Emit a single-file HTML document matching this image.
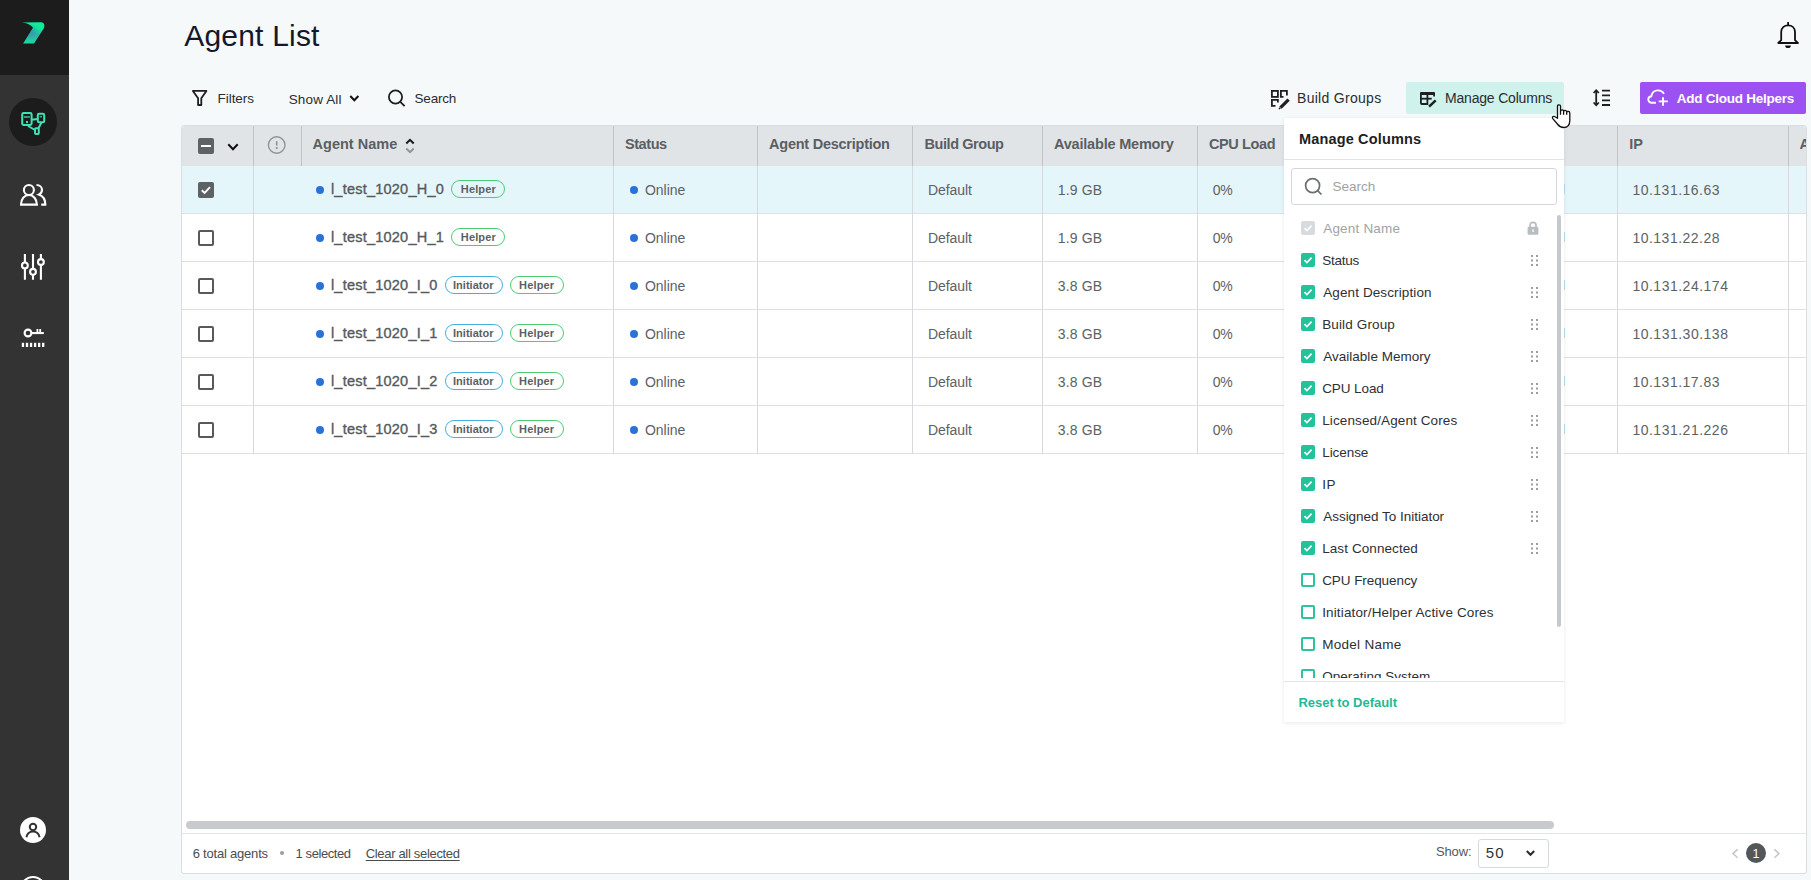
<!DOCTYPE html>
<html><head><meta charset="utf-8">
<style>
*{box-sizing:border-box;margin:0;padding:0}
html,body{width:1811px;height:880px;overflow:hidden}
body{background:#f5f9fa;font-family:"Liberation Sans",sans-serif;color:#4a4a4a;position:relative}
.a{position:absolute}
.t{position:absolute;line-height:1;white-space:nowrap}
#side{left:0;top:0;width:69px;height:880px;background:#333333}
#sidetop{left:0;top:0;width:69px;height:74.5px;background:#1c1c1c}
#table{left:181px;top:125px;width:1626px;height:749px;background:#fff;border:1px solid #dde1e5;border-radius:5px;overflow:hidden}
.vl{position:absolute;width:1px;background:#d6dadd}
.hl{position:absolute;height:1px;background:#dde1e5}
.th{font-size:14.5px;font-weight:bold;color:#575c60}
.td{font-size:14px;color:#555}
.cb{position:absolute;width:16px;height:16px;border:2px solid #555;border-radius:2px;background:#fff}
.dot{position:absolute;width:8px;height:8px;border-radius:50%;background:#2a72d8}
.tag{position:absolute;height:18px;border-radius:9px;font-size:12px;line-height:16px;color:#555;white-space:nowrap;text-align:center}
.ti{border:1px solid #45aee0;width:58px}
.th2{border:1px solid #4ccc78;width:55px}
#pop{left:1284px;top:118px;width:280px;height:604px;background:#fff;box-shadow:0 1px 6px rgba(0,0,0,0.13);border-radius:2px;overflow:hidden}
.pl{font-size:13.6px;color:#333}
.pcb{position:absolute;left:17px;width:14px;height:14px;border-radius:2px;background:#1fbf99}
.pcbo{position:absolute;left:17px;width:14px;height:14px;border-radius:2px;border:2px solid #1fbf99;background:#fff}
.drag{position:absolute;left:247px;width:7px;height:12px}
</style></head>
<body>
<div id="side" class="a"></div>
<div id="sidetop" class="a"></div>
<!-- logo -->
<svg class="a" style="left:0;top:0" width="69" height="74" viewBox="0 0 69 74">
  <defs>
    <linearGradient id="lg1" x1="0" y1="0" x2="0" y2="1">
      <stop offset="0" stop-color="#0df09a"/><stop offset="0.3" stop-color="#0de99b"/><stop offset="0.6" stop-color="#2fb6a4"/><stop offset="1" stop-color="#17dca0"/>
    </linearGradient>
    <radialGradient id="rg1" cx="31.5" cy="32" r="8" gradientUnits="userSpaceOnUse">
      <stop offset="0" stop-color="#3a8fb0" stop-opacity="0.85"/><stop offset="1" stop-color="#3a8fb0" stop-opacity="0"/>
    </radialGradient>
  </defs>
  <path d="M21.7 22.4 L41.2 22.3 Q45.5 23 44 28 L34 43.5 L23.1 43.5 L33.1 27.8 Q30 23 21.7 22.4 Z" fill="url(#lg1)"/>
  <path d="M21.7 22.4 L41.2 22.3 Q45.5 23 44 28 L34 43.5 L23.1 43.5 L33.1 27.8 Q30 23 21.7 22.4 Z" fill="url(#rg1)"/>
</svg>
<!-- active nav circle -->
<div class="a" style="left:9px;top:98px;width:48px;height:48px;border-radius:50%;background:#1c1c1c"></div>
<svg class="a" style="left:13px;top:102px" width="40" height="40" viewBox="0 0 40 40" fill="none" stroke="#3de3b2" stroke-width="2" stroke-linejoin="round">
  <rect x="9.2" y="11" width="9.4" height="12" rx="1.4"/>
  <rect x="24.8" y="11.7" width="6.4" height="8.6" rx="1.3"/>
  <rect x="22" y="26.2" width="3.8" height="5.8" rx="1"/>
  <line x1="18.6" y1="17.7" x2="24.8" y2="17"/>
  <line x1="15" y1="24" x2="22" y2="28"/>
  <line x1="28.5" y1="20.3" x2="25.5" y2="26.2"/>
  <line x1="11" y1="15" x2="16.8" y2="15" stroke-width="1.3"/>
  <rect x="13" y="19" width="2" height="2" fill="#3ddfb0" stroke="none"/>
  <line x1="26.8" y1="14.8" x2="29" y2="14.8" stroke-width="1.1"/>
</svg>
<!-- users -->
<svg class="a" style="left:16px;top:178px" width="34" height="34" viewBox="0 0 34 34" fill="none" stroke="#fff" stroke-width="2.1">
  <circle cx="12.9" cy="12" r="5"/>
  <path d="M5 26.6 C5 21 8.5 17 12.9 17 C17.3 17 20.9 21 20.9 26.6 Z"/>
  <path d="M20.5 7 C23.8 7 26 9.2 26 11.8 C26 14.2 24.6 15.8 22.8 16.6 C26.7 18 29.3 21.8 29.3 26.6 H25.2"/>
</svg>
<!-- sliders -->
<svg class="a" style="left:16px;top:250px" width="34" height="34" viewBox="0 0 34 34" fill="none" stroke="#fff" stroke-width="2.1">
  <path d="M8.9 3.9 V12.5 M8.9 18.3 V29.7"/><circle cx="8.9" cy="15.4" r="2.9"/>
  <path d="M17 3.9 V18.9 M17 24.7 V29.7"/><circle cx="17" cy="21.8" r="2.9"/>
  <path d="M24.9 3.9 V9.1 M24.9 14.9 V29.7"/><circle cx="24.9" cy="12" r="2.9"/>
</svg>
<!-- key -->
<svg class="a" style="left:16px;top:320px" width="34" height="34" viewBox="0 0 34 34" fill="#fff">
  <circle cx="12" cy="13" r="3.4" fill="none" stroke="#fff" stroke-width="2.1"/>
  <rect x="15.2" y="12" width="12.6" height="2.1"/>
  <rect x="20.5" y="9" width="1.8" height="4"/><rect x="23.3" y="9" width="1.8" height="4"/>
  <rect x="5.8" y="22.8" width="2.3" height="4.2"/><rect x="9.85" y="22.8" width="2.3" height="4.2"/><rect x="13.9" y="22.8" width="2.3" height="4.2"/><rect x="17.95" y="22.8" width="2.3" height="4.2"/><rect x="22" y="22.8" width="2.3" height="4.2"/><rect x="26.05" y="22.8" width="2.3" height="4.2"/>
</svg>
<!-- user avatar bottom -->
<div class="a" style="left:20px;top:817px;width:26px;height:26px;border-radius:50%;background:#fff"></div>
<svg class="a" style="left:20px;top:817px" width="26" height="26" viewBox="0 0 26 26" fill="none" stroke="#333" stroke-width="2">
  <circle cx="13" cy="10" r="3.2"/>
  <path d="M6.4 20.3 C7.2 16.4 9.8 14.6 13 14.6 C16.2 14.6 18.8 16.4 19.6 20.3"/>
</svg>
<div class="a" style="left:20px;top:876px;width:26px;height:26px;border-radius:50%;border:2px solid #fff"></div>

<!-- bell -->
<svg class="a" style="left:1772px;top:16px" width="32" height="36" viewBox="0 0 32 36" fill="none" stroke="#111" stroke-width="1.8" stroke-linejoin="round">
  <path d="M16.1 6 V9.4"/>
  <path d="M9.2 24.2 V16 C9.2 11.8 12.2 9.4 16.1 9.4 C20 9.4 23 11.8 23 16 V24.2 L25.9 27 H6.3 Z"/>
  <path d="M13.1 29.4 H18.9 C18.9 31 17.7 32 16 32 C14.3 32 13.1 31 13.1 29.4 Z" fill="#111" stroke="none"/>
</svg>
<svg class="a" style="left:190px;top:88px" width="20" height="20" viewBox="0 0 20 20" fill="none" stroke="#1e1f21" stroke-width="1.8" stroke-linejoin="round"><path d="M2.9 2.9 H16.4 L11.3 10.3 V17 H8.1 V10.3 Z"/></svg>
<svg class="a" style="left:348px;top:93px" width="12" height="10" viewBox="0 0 12 10" fill="none" stroke="#111" stroke-width="2"><path d="M2.3 3 L6.3 7.2 L10.4 3"/></svg>
<svg class="a" style="left:386px;top:87.6px" width="22" height="22" viewBox="0 0 22 22" fill="none" stroke="#1e1f21" stroke-width="1.8"><circle cx="9.5" cy="9" r="6.6"/><path d="M14.3 13.8 L18.6 18.2"/></svg>
<svg class="a" style="left:1269px;top:88px" width="22" height="22" viewBox="0 0 22 22" fill="none" stroke="#1e1f21" stroke-width="1.8"><rect x="2.9" y="2.9" width="6" height="6"/><path d="M17.9 7.5 V2.9 H11.9 V8.9 H14.5"/><path d="M8.9 14.5 V11.9 H2.9 V17.9 H6.5"/><path d="M19.6 11.6 L11.5 19.7" stroke-width="3.2" stroke-linecap="butt"/><path d="M11.3 19.9 L10 20.9" stroke-width="1.6"/></svg>
<div class="a" style="left:1406px;top:82px;width:158px;height:31.5px;background:#cff2ec;border-radius:2px"></div>
<svg class="a" style="left:1414px;top:86px" width="28" height="26" viewBox="0 0 28 26" fill="none" stroke="#1e1f21" stroke-width="1.8"><rect x="6" y="5.9" width="15" height="3" rx="1" fill="#1e1f21" stroke="none"/><path d="M20.1 7 V10.6"/><path d="M6.9 7.5 V17 Q6.9 18 8 18 H13.4 V8.5"/><path d="M6.9 12.7 H17.7"/><path d="M21.7 14.4 L15.1 20.7" stroke-width="2.5"/></svg>
<svg class="a" style="left:1591px;top:87px" width="22" height="22" viewBox="0 0 22 22" fill="none" stroke="#1e1f21" stroke-width="1.8"><path d="M5.2 3.5 V17.8"/><path d="M2.6 6 L5.2 3.2 L7.8 6"/><path d="M2.6 15.5 L5.2 18.3 L7.8 15.5"/><path d="M11 3.6 H19 M11 8.3 H19 M11 13.4 H19 M11 18 H19"/></svg>
<div class="a" style="left:1640px;top:82px;width:166px;height:31.5px;background:#9c52f3;border-radius:2px"></div>
<svg class="a" style="left:1646px;top:88px" width="24" height="20" viewBox="0 0 24 20" fill="none" stroke="#fff" stroke-width="1.9" stroke-linecap="butt"><path d="M9.9 14.8 H5.6 C3.8 14.8 2.3 13.4 2.3 11.6 C2.3 9.8 3.6 8.4 5.3 8.2 C6 4.6 8.6 2.4 11.9 2.4 C14.8 2.4 16.9 3.9 18 5.9"/><path d="M17 9.3 V17.8 M12.7 13.4 H21.8"/></svg><div class="t" style="left:184.30px;top:20.80px;font-size:30px;font-weight:normal;color:#16172a;letter-spacing:0.189px;">Agent List</div>
<div class="t" style="left:217.60px;top:91.80px;font-size:13.5px;font-weight:normal;color:#2b2d30;letter-spacing:-0.067px;">Filters</div>
<div class="t" style="left:288.70px;top:92.70px;font-size:13.5px;font-weight:normal;color:#2b2d30;letter-spacing:0.143px;">Show All</div>
<div class="t" style="left:414.60px;top:91.90px;font-size:13.5px;font-weight:normal;color:#2b2d30;letter-spacing:-0.240px;">Search</div>
<div class="t" style="left:1297.00px;top:90.70px;font-size:14px;font-weight:normal;color:#2b2d30;letter-spacing:0.291px;">Build Groups</div>
<div class="t" style="left:1445.00px;top:90.90px;font-size:14px;font-weight:normal;color:#2b2d30;letter-spacing:-0.192px;">Manage Columns</div>
<div class="t" style="left:1676.70px;top:91.70px;font-size:13.5px;font-weight:bold;color:#ffffff;letter-spacing:-0.250px;">Add Cloud Helpers</div><div class="a" style="left:181px;top:125px;width:1626px;height:749px;background:#fff;border:1px solid #dadee1;border-radius:3px"></div>
<div class="a" style="left:182px;top:126px;width:1624px;height:40px;background:#e1e4e7;border-radius:3px 3px 0 0"></div>
<div class="a" style="left:182px;top:166px;width:1624px;height:47px;background:#e5f6fa"></div>
<div class="hl" style="left:182px;top:213px;width:1624px"></div>
<div class="hl" style="left:182px;top:261px;width:1624px"></div>
<div class="hl" style="left:182px;top:309px;width:1624px"></div>
<div class="hl" style="left:182px;top:357px;width:1624px"></div>
<div class="hl" style="left:182px;top:405px;width:1624px"></div>
<div class="hl" style="left:182px;top:453px;width:1624px"></div>
<div class="vl" style="left:253px;top:126px;height:40px;background:#bec4c8"></div>
<div class="vl" style="left:301px;top:126px;height:40px;background:#bec4c8"></div>
<div class="vl" style="left:613px;top:126px;height:40px;background:#bec4c8"></div>
<div class="vl" style="left:757px;top:126px;height:40px;background:#bec4c8"></div>
<div class="vl" style="left:912px;top:126px;height:40px;background:#bec4c8"></div>
<div class="vl" style="left:1042px;top:126px;height:40px;background:#bec4c8"></div>
<div class="vl" style="left:1197px;top:126px;height:40px;background:#bec4c8"></div>
<div class="vl" style="left:1617px;top:126px;height:40px;background:#bec4c8"></div>
<div class="vl" style="left:1788px;top:126px;height:40px;background:#bec4c8"></div>
<div class="vl" style="left:253px;top:166px;height:288px"></div>
<div class="vl" style="left:613px;top:166px;height:288px"></div>
<div class="vl" style="left:757px;top:166px;height:288px"></div>
<div class="vl" style="left:912px;top:166px;height:288px"></div>
<div class="vl" style="left:1042px;top:166px;height:288px"></div>
<div class="vl" style="left:1197px;top:166px;height:288px"></div>
<div class="vl" style="left:1617px;top:166px;height:288px"></div>
<div class="vl" style="left:1788px;top:166px;height:288px"></div>
<div class="a" style="left:198px;top:138px;width:16px;height:16px;border-radius:2px;background:#5f6265"></div>
<div class="a" style="left:201px;top:144.8px;width:10px;height:2.5px;background:#fff"></div>
<svg class="a" style="left:226px;top:142px" width="14" height="11" viewBox="0 0 14 11" fill="none" stroke="#111" stroke-width="2"><path d="M2.3 2.3 L7 7.3 L11.7 2.3"/></svg>
<svg class="a" style="left:266px;top:135px" width="21" height="21" viewBox="0 0 21 21" fill="none" stroke="#8d9499" stroke-width="1.4"><circle cx="10.7" cy="10" r="8.3"/><path d="M10.7 6.2 V10.6" stroke-width="1.6"/><circle cx="10.7" cy="13.1" r="0.5" stroke-width="1.3"/></svg>
<svg class="a" style="left:403px;top:137px" width="14" height="18" viewBox="0 0 14 18" fill="none" stroke-width="1.8"><path d="M3.3 6.5 L7 2.9 L10.7 6.5" stroke="#161718" stroke-width="2"/><path d="M3.3 11.5 L7 15.1 L10.7 11.5" stroke="#8f9498" stroke-width="2"/></svg>
<div class="a" style="left:198px;top:182px;width:16px;height:16px;border-radius:2px;background:#5f6265"></div>
<svg class="a" style="left:198px;top:182px" width="16" height="16" viewBox="0 0 16 16" fill="none" stroke="#fff" stroke-width="1.9"><path d="M3.8 8.3 L6.6 11 L12 5.2"/></svg>
<div class="dot" style="left:316px;top:186px"></div>
<div class="dot" style="left:630px;top:186px"></div>
<div class="a" style="left:1564px;top:184px;width:1px;height:10px;background:#b8def0"></div>
<div class="a" style="left:198px;top:230px;width:16px;height:16px;border-radius:2px;border:2px solid #58595b;background:#fff"></div>
<div class="dot" style="left:316px;top:234px"></div>
<div class="dot" style="left:630px;top:234px"></div>
<div class="a" style="left:1564px;top:232px;width:1px;height:10px;background:#b8def0"></div>
<div class="a" style="left:198px;top:278px;width:16px;height:16px;border-radius:2px;border:2px solid #58595b;background:#fff"></div>
<div class="dot" style="left:316px;top:282px"></div>
<div class="dot" style="left:630px;top:282px"></div>
<div class="a" style="left:1564px;top:280px;width:1px;height:10px;background:#b8def0"></div>
<div class="a" style="left:198px;top:326px;width:16px;height:16px;border-radius:2px;border:2px solid #58595b;background:#fff"></div>
<div class="dot" style="left:316px;top:330px"></div>
<div class="dot" style="left:630px;top:330px"></div>
<div class="a" style="left:1564px;top:328px;width:1px;height:10px;background:#b8def0"></div>
<div class="a" style="left:198px;top:374px;width:16px;height:16px;border-radius:2px;border:2px solid #58595b;background:#fff"></div>
<div class="dot" style="left:316px;top:378px"></div>
<div class="dot" style="left:630px;top:378px"></div>
<div class="a" style="left:1564px;top:376px;width:1px;height:10px;background:#b8def0"></div>
<div class="a" style="left:198px;top:422px;width:16px;height:16px;border-radius:2px;border:2px solid #58595b;background:#fff"></div>
<div class="dot" style="left:316px;top:426px"></div>
<div class="dot" style="left:630px;top:426px"></div>
<div class="a" style="left:1564px;top:424px;width:1px;height:10px;background:#b8def0"></div><div class="tag th2" style="left:451px;top:180px;width:54px"></div>
<div class="tag th2" style="left:451px;top:228px;width:54px"></div>
<div class="tag ti" style="left:445px;top:276px;width:58px"></div>
<div class="tag th2" style="left:510px;top:276px;width:54px"></div>
<div class="tag ti" style="left:445px;top:324px;width:58px"></div>
<div class="tag th2" style="left:510px;top:324px;width:54px"></div>
<div class="tag ti" style="left:445px;top:372px;width:58px"></div>
<div class="tag th2" style="left:510px;top:372px;width:54px"></div>
<div class="tag ti" style="left:445px;top:420px;width:58px"></div>
<div class="tag th2" style="left:510px;top:420px;width:54px"></div><div class="t" style="left:312.60px;top:137.30px;font-size:14.5px;font-weight:bold;color:#5a5f63;letter-spacing:0.000px;">Agent Name</div>
<div class="t" style="left:625.00px;top:137.30px;font-size:14.5px;font-weight:bold;color:#5a5f63;letter-spacing:-0.440px;">Status</div>
<div class="t" style="left:769.10px;top:137.30px;font-size:14.5px;font-weight:bold;color:#5a5f63;letter-spacing:-0.250px;">Agent Description</div>
<div class="t" style="left:924.50px;top:137.30px;font-size:14.5px;font-weight:bold;color:#5a5f63;letter-spacing:-0.430px;">Build Group</div>
<div class="t" style="left:1054.00px;top:137.30px;font-size:14.5px;font-weight:bold;color:#5a5f63;letter-spacing:-0.200px;">Available Memory</div>
<div class="t" style="left:1209.00px;top:137.30px;font-size:14.5px;font-weight:bold;color:#5a5f63;letter-spacing:-0.386px;">CPU Load</div>
<div class="t" style="left:1629.30px;top:137.30px;font-size:14.5px;font-weight:bold;color:#5a5f63;letter-spacing:0.000px;">IP</div>
<div class="t" style="left:1799.50px;top:137.30px;font-size:14.5px;font-weight:bold;color:#5a5f63;letter-spacing:0.000px;width:6.50px;overflow:hidden">A</div>
<div class="t" style="left:330.90px;top:181.70px;font-size:14.5px;font-weight:normal;color:#55595d;letter-spacing:0.229px;-webkit-text-stroke:0.35px #55595d">l_test_1020_H_0</div>
<div class="t" style="left:644.90px;top:183.30px;font-size:14px;font-weight:normal;color:#5e6164;letter-spacing:0.000px;">Online</div>
<div class="t" style="left:928.00px;top:183.30px;font-size:14px;font-weight:normal;color:#5e6164;letter-spacing:-0.083px;">Default</div>
<div class="t" style="left:1057.80px;top:183.30px;font-size:14px;font-weight:normal;color:#5e6164;letter-spacing:0.120px;">1.9 GB</div>
<div class="t" style="left:1212.80px;top:183.30px;font-size:14px;font-weight:normal;color:#5e6164;letter-spacing:-0.400px;">0%</div>
<div class="t" style="left:1632.40px;top:183.30px;font-size:14px;font-weight:normal;color:#5e6164;letter-spacing:0.491px;">10.131.16.63</div>
<div class="t" style="left:330.90px;top:229.70px;font-size:14.5px;font-weight:normal;color:#55595d;letter-spacing:0.229px;-webkit-text-stroke:0.35px #55595d">l_test_1020_H_1</div>
<div class="t" style="left:644.90px;top:231.30px;font-size:14px;font-weight:normal;color:#5e6164;letter-spacing:0.000px;">Online</div>
<div class="t" style="left:928.00px;top:231.30px;font-size:14px;font-weight:normal;color:#5e6164;letter-spacing:-0.083px;">Default</div>
<div class="t" style="left:1057.80px;top:231.30px;font-size:14px;font-weight:normal;color:#5e6164;letter-spacing:0.120px;">1.9 GB</div>
<div class="t" style="left:1212.80px;top:231.30px;font-size:14px;font-weight:normal;color:#5e6164;letter-spacing:-0.400px;">0%</div>
<div class="t" style="left:1632.40px;top:231.30px;font-size:14px;font-weight:normal;color:#5e6164;letter-spacing:0.491px;">10.131.22.28</div>
<div class="t" style="left:330.90px;top:277.70px;font-size:14.5px;font-weight:normal;color:#55595d;letter-spacing:0.229px;-webkit-text-stroke:0.35px #55595d">l_test_1020_I_0</div>
<div class="t" style="left:644.90px;top:279.30px;font-size:14px;font-weight:normal;color:#5e6164;letter-spacing:0.000px;">Online</div>
<div class="t" style="left:928.00px;top:279.30px;font-size:14px;font-weight:normal;color:#5e6164;letter-spacing:-0.083px;">Default</div>
<div class="t" style="left:1057.80px;top:279.30px;font-size:14px;font-weight:normal;color:#5e6164;letter-spacing:0.120px;">3.8 GB</div>
<div class="t" style="left:1212.80px;top:279.30px;font-size:14px;font-weight:normal;color:#5e6164;letter-spacing:-0.400px;">0%</div>
<div class="t" style="left:1632.40px;top:279.30px;font-size:14px;font-weight:normal;color:#5e6164;letter-spacing:0.500px;">10.131.24.174</div>
<div class="t" style="left:330.90px;top:325.70px;font-size:14.5px;font-weight:normal;color:#55595d;letter-spacing:0.229px;-webkit-text-stroke:0.35px #55595d">l_test_1020_I_1</div>
<div class="t" style="left:644.90px;top:327.30px;font-size:14px;font-weight:normal;color:#5e6164;letter-spacing:0.000px;">Online</div>
<div class="t" style="left:928.00px;top:327.30px;font-size:14px;font-weight:normal;color:#5e6164;letter-spacing:-0.083px;">Default</div>
<div class="t" style="left:1057.80px;top:327.30px;font-size:14px;font-weight:normal;color:#5e6164;letter-spacing:0.120px;">3.8 GB</div>
<div class="t" style="left:1212.80px;top:327.30px;font-size:14px;font-weight:normal;color:#5e6164;letter-spacing:-0.400px;">0%</div>
<div class="t" style="left:1632.40px;top:327.30px;font-size:14px;font-weight:normal;color:#5e6164;letter-spacing:0.500px;">10.131.30.138</div>
<div class="t" style="left:330.90px;top:373.70px;font-size:14.5px;font-weight:normal;color:#55595d;letter-spacing:0.229px;-webkit-text-stroke:0.35px #55595d">l_test_1020_I_2</div>
<div class="t" style="left:644.90px;top:375.30px;font-size:14px;font-weight:normal;color:#5e6164;letter-spacing:0.000px;">Online</div>
<div class="t" style="left:928.00px;top:375.30px;font-size:14px;font-weight:normal;color:#5e6164;letter-spacing:-0.083px;">Default</div>
<div class="t" style="left:1057.80px;top:375.30px;font-size:14px;font-weight:normal;color:#5e6164;letter-spacing:0.120px;">3.8 GB</div>
<div class="t" style="left:1212.80px;top:375.30px;font-size:14px;font-weight:normal;color:#5e6164;letter-spacing:-0.400px;">0%</div>
<div class="t" style="left:1632.40px;top:375.30px;font-size:14px;font-weight:normal;color:#5e6164;letter-spacing:0.491px;">10.131.17.83</div>
<div class="t" style="left:330.90px;top:421.70px;font-size:14.5px;font-weight:normal;color:#55595d;letter-spacing:0.229px;-webkit-text-stroke:0.35px #55595d">l_test_1020_I_3</div>
<div class="t" style="left:644.90px;top:423.30px;font-size:14px;font-weight:normal;color:#5e6164;letter-spacing:0.000px;">Online</div>
<div class="t" style="left:928.00px;top:423.30px;font-size:14px;font-weight:normal;color:#5e6164;letter-spacing:-0.083px;">Default</div>
<div class="t" style="left:1057.80px;top:423.30px;font-size:14px;font-weight:normal;color:#5e6164;letter-spacing:0.120px;">3.8 GB</div>
<div class="t" style="left:1212.80px;top:423.30px;font-size:14px;font-weight:normal;color:#5e6164;letter-spacing:-0.400px;">0%</div>
<div class="t" style="left:1632.40px;top:423.30px;font-size:14px;font-weight:normal;color:#5e6164;letter-spacing:0.500px;">10.131.21.226</div><div class="t" style="left:460.80px;top:184.20px;font-size:11px;font-weight:bold;color:#5b5f63;letter-spacing:0.140px;">Helper</div>
<div class="t" style="left:460.80px;top:232.20px;font-size:11px;font-weight:bold;color:#5b5f63;letter-spacing:0.140px;">Helper</div>
<div class="t" style="left:453.00px;top:280.20px;font-size:11px;font-weight:bold;color:#5b5f63;letter-spacing:0.025px;">Initiator</div>
<div class="t" style="left:519.10px;top:280.20px;font-size:11px;font-weight:bold;color:#5b5f63;letter-spacing:0.140px;">Helper</div>
<div class="t" style="left:453.00px;top:328.20px;font-size:11px;font-weight:bold;color:#5b5f63;letter-spacing:0.025px;">Initiator</div>
<div class="t" style="left:519.10px;top:328.20px;font-size:11px;font-weight:bold;color:#5b5f63;letter-spacing:0.140px;">Helper</div>
<div class="t" style="left:453.00px;top:376.20px;font-size:11px;font-weight:bold;color:#5b5f63;letter-spacing:0.025px;">Initiator</div>
<div class="t" style="left:519.10px;top:376.20px;font-size:11px;font-weight:bold;color:#5b5f63;letter-spacing:0.140px;">Helper</div>
<div class="t" style="left:453.00px;top:424.20px;font-size:11px;font-weight:bold;color:#5b5f63;letter-spacing:0.025px;">Initiator</div>
<div class="t" style="left:519.10px;top:424.20px;font-size:11px;font-weight:bold;color:#5b5f63;letter-spacing:0.140px;">Helper</div><div class="a" style="left:186px;top:821px;width:1368px;height:8px;background:#c8cbcd;border-radius:4px"></div>
<div class="hl" style="left:182px;top:833px;width:1624px;background:#e2e5e8"></div>
<div class="a" style="left:279.6px;top:851px;width:4px;height:4px;border-radius:50%;background:#9a9ea1"></div>
<div class="a" style="left:1477.5px;top:838.5px;width:71px;height:29px;border:1px solid #d6dadd;border-radius:3px;background:#fff"></div>
<svg class="a" style="left:1524px;top:847px" width="13" height="12" viewBox="0 0 13 12" fill="none" stroke="#2a2a2a" stroke-width="2"><path d="M2.8 4 L6.5 7.8 L10.2 4"/></svg>
<svg class="a" style="left:1729px;top:847px" width="12" height="13" viewBox="0 0 12 13" fill="none" stroke="#c3c6c9" stroke-width="1.5"><path d="M8.6 2.4 L4 6.6 L8.6 10.8"/></svg>
<div class="a" style="left:1746px;top:843px;width:20px;height:20px;border-radius:50%;background:#545759"></div>
<svg class="a" style="left:1771px;top:847px" width="12" height="13" viewBox="0 0 12 13" fill="none" stroke="#c3c6c9" stroke-width="1.5"><path d="M3.4 2.4 L8 6.6 L3.4 10.8"/></svg><div class="t" style="left:192.70px;top:846.70px;font-size:13px;font-weight:normal;color:#4a4d50;letter-spacing:-0.208px;">6 total agents</div>
<div class="t" style="left:295.60px;top:846.70px;font-size:13px;font-weight:normal;color:#4a4d50;letter-spacing:-0.422px;">1 selected</div>
<div class="t" style="left:365.70px;top:846.70px;font-size:13px;font-weight:normal;color:#4a4d50;letter-spacing:-0.318px;text-decoration:underline;text-underline-offset:2px">Clear all selected</div>
<div class="t" style="left:1436.00px;top:845.30px;font-size:13px;font-weight:normal;color:#55585b;letter-spacing:-0.150px;">Show:</div>
<div class="t" style="left:1485.70px;top:845.30px;font-size:15px;font-weight:normal;color:#333;letter-spacing:1.100px;">50</div>
<div class="t" style="left:1752.50px;top:847.50px;font-size:12.5px;font-weight:normal;color:#ffffff;letter-spacing:0.000px;">1</div><div class="a" style="left:1284px;top:118px;width:280px;height:604px;background:#fff;box-shadow:0 1px 4px rgba(0,0,0,0.09)"></div>
<div class="hl" style="left:1284px;top:159px;width:280px;background:#e2e5e8"></div>
<div class="a" style="left:1291px;top:167.5px;width:266px;height:37px;border:1px solid #d3d7da;border-radius:3px;background:#fff"></div>
<svg class="a" style="left:1302px;top:175px" width="22" height="22" viewBox="0 0 22 22" fill="none" stroke="#6b6f73" stroke-width="1.7"><circle cx="10.6" cy="10.6" r="7"/><path d="M15.6 15.6 L19.5 19.5"/></svg>
<div class="a" style="left:1284px;top:210px;width:280px;height:468px;overflow:hidden">
<div class="a" style="left:17px;top:11.300000000000011px;width:14px;height:14px;border-radius:2px;background:#d8dbdd"></div>
<svg class="a" style="left:17px;top:11.300000000000011px" width="14" height="14" viewBox="0 0 14 14" fill="none" stroke="#fff" stroke-width="1.7"><path d="M3.5 7.2 L5.9 9.6 L10.6 4.6"/></svg>
<div class="a" style="left:17px;top:43.30000000000001px;width:14px;height:14px;border-radius:2px;background:#22c398"></div>
<svg class="a" style="left:17px;top:43.30000000000001px" width="14" height="14" viewBox="0 0 14 14" fill="none" stroke="#fff" stroke-width="1.7"><path d="M3.5 7.2 L5.9 9.6 L10.6 4.6"/></svg>
<svg class="a" style="left:246.5px;top:45.0px" width="8" height="12" viewBox="0 0 8 12" fill="#9a9ea1"><rect x="0" y="0" width="2" height="2"/><rect x="0" y="4.5" width="2" height="2"/><rect x="0" y="9" width="2" height="2"/><rect x="5" y="0" width="2" height="2"/><rect x="5" y="4.5" width="2" height="2"/><rect x="5" y="9" width="2" height="2"/></svg>
<div class="a" style="left:17px;top:75.30000000000001px;width:14px;height:14px;border-radius:2px;background:#22c398"></div>
<svg class="a" style="left:17px;top:75.30000000000001px" width="14" height="14" viewBox="0 0 14 14" fill="none" stroke="#fff" stroke-width="1.7"><path d="M3.5 7.2 L5.9 9.6 L10.6 4.6"/></svg>
<svg class="a" style="left:246.5px;top:77.0px" width="8" height="12" viewBox="0 0 8 12" fill="#9a9ea1"><rect x="0" y="0" width="2" height="2"/><rect x="0" y="4.5" width="2" height="2"/><rect x="0" y="9" width="2" height="2"/><rect x="5" y="0" width="2" height="2"/><rect x="5" y="4.5" width="2" height="2"/><rect x="5" y="9" width="2" height="2"/></svg>
<div class="a" style="left:17px;top:107.30000000000001px;width:14px;height:14px;border-radius:2px;background:#22c398"></div>
<svg class="a" style="left:17px;top:107.30000000000001px" width="14" height="14" viewBox="0 0 14 14" fill="none" stroke="#fff" stroke-width="1.7"><path d="M3.5 7.2 L5.9 9.6 L10.6 4.6"/></svg>
<svg class="a" style="left:246.5px;top:109.0px" width="8" height="12" viewBox="0 0 8 12" fill="#9a9ea1"><rect x="0" y="0" width="2" height="2"/><rect x="0" y="4.5" width="2" height="2"/><rect x="0" y="9" width="2" height="2"/><rect x="5" y="0" width="2" height="2"/><rect x="5" y="4.5" width="2" height="2"/><rect x="5" y="9" width="2" height="2"/></svg>
<div class="a" style="left:17px;top:139.3px;width:14px;height:14px;border-radius:2px;background:#22c398"></div>
<svg class="a" style="left:17px;top:139.3px" width="14" height="14" viewBox="0 0 14 14" fill="none" stroke="#fff" stroke-width="1.7"><path d="M3.5 7.2 L5.9 9.6 L10.6 4.6"/></svg>
<svg class="a" style="left:246.5px;top:141.0px" width="8" height="12" viewBox="0 0 8 12" fill="#9a9ea1"><rect x="0" y="0" width="2" height="2"/><rect x="0" y="4.5" width="2" height="2"/><rect x="0" y="9" width="2" height="2"/><rect x="5" y="0" width="2" height="2"/><rect x="5" y="4.5" width="2" height="2"/><rect x="5" y="9" width="2" height="2"/></svg>
<div class="a" style="left:17px;top:171.3px;width:14px;height:14px;border-radius:2px;background:#22c398"></div>
<svg class="a" style="left:17px;top:171.3px" width="14" height="14" viewBox="0 0 14 14" fill="none" stroke="#fff" stroke-width="1.7"><path d="M3.5 7.2 L5.9 9.6 L10.6 4.6"/></svg>
<svg class="a" style="left:246.5px;top:173.0px" width="8" height="12" viewBox="0 0 8 12" fill="#9a9ea1"><rect x="0" y="0" width="2" height="2"/><rect x="0" y="4.5" width="2" height="2"/><rect x="0" y="9" width="2" height="2"/><rect x="5" y="0" width="2" height="2"/><rect x="5" y="4.5" width="2" height="2"/><rect x="5" y="9" width="2" height="2"/></svg>
<div class="a" style="left:17px;top:203.3px;width:14px;height:14px;border-radius:2px;background:#22c398"></div>
<svg class="a" style="left:17px;top:203.3px" width="14" height="14" viewBox="0 0 14 14" fill="none" stroke="#fff" stroke-width="1.7"><path d="M3.5 7.2 L5.9 9.6 L10.6 4.6"/></svg>
<svg class="a" style="left:246.5px;top:205.0px" width="8" height="12" viewBox="0 0 8 12" fill="#9a9ea1"><rect x="0" y="0" width="2" height="2"/><rect x="0" y="4.5" width="2" height="2"/><rect x="0" y="9" width="2" height="2"/><rect x="5" y="0" width="2" height="2"/><rect x="5" y="4.5" width="2" height="2"/><rect x="5" y="9" width="2" height="2"/></svg>
<div class="a" style="left:17px;top:235.3px;width:14px;height:14px;border-radius:2px;background:#22c398"></div>
<svg class="a" style="left:17px;top:235.3px" width="14" height="14" viewBox="0 0 14 14" fill="none" stroke="#fff" stroke-width="1.7"><path d="M3.5 7.2 L5.9 9.6 L10.6 4.6"/></svg>
<svg class="a" style="left:246.5px;top:237.0px" width="8" height="12" viewBox="0 0 8 12" fill="#9a9ea1"><rect x="0" y="0" width="2" height="2"/><rect x="0" y="4.5" width="2" height="2"/><rect x="0" y="9" width="2" height="2"/><rect x="5" y="0" width="2" height="2"/><rect x="5" y="4.5" width="2" height="2"/><rect x="5" y="9" width="2" height="2"/></svg>
<div class="a" style="left:17px;top:267.3px;width:14px;height:14px;border-radius:2px;background:#22c398"></div>
<svg class="a" style="left:17px;top:267.3px" width="14" height="14" viewBox="0 0 14 14" fill="none" stroke="#fff" stroke-width="1.7"><path d="M3.5 7.2 L5.9 9.6 L10.6 4.6"/></svg>
<svg class="a" style="left:246.5px;top:269.0px" width="8" height="12" viewBox="0 0 8 12" fill="#9a9ea1"><rect x="0" y="0" width="2" height="2"/><rect x="0" y="4.5" width="2" height="2"/><rect x="0" y="9" width="2" height="2"/><rect x="5" y="0" width="2" height="2"/><rect x="5" y="4.5" width="2" height="2"/><rect x="5" y="9" width="2" height="2"/></svg>
<div class="a" style="left:17px;top:299.3px;width:14px;height:14px;border-radius:2px;background:#22c398"></div>
<svg class="a" style="left:17px;top:299.3px" width="14" height="14" viewBox="0 0 14 14" fill="none" stroke="#fff" stroke-width="1.7"><path d="M3.5 7.2 L5.9 9.6 L10.6 4.6"/></svg>
<svg class="a" style="left:246.5px;top:301.0px" width="8" height="12" viewBox="0 0 8 12" fill="#9a9ea1"><rect x="0" y="0" width="2" height="2"/><rect x="0" y="4.5" width="2" height="2"/><rect x="0" y="9" width="2" height="2"/><rect x="5" y="0" width="2" height="2"/><rect x="5" y="4.5" width="2" height="2"/><rect x="5" y="9" width="2" height="2"/></svg>
<div class="a" style="left:17px;top:331.29999999999995px;width:14px;height:14px;border-radius:2px;background:#22c398"></div>
<svg class="a" style="left:17px;top:331.29999999999995px" width="14" height="14" viewBox="0 0 14 14" fill="none" stroke="#fff" stroke-width="1.7"><path d="M3.5 7.2 L5.9 9.6 L10.6 4.6"/></svg>
<svg class="a" style="left:246.5px;top:333.0px" width="8" height="12" viewBox="0 0 8 12" fill="#9a9ea1"><rect x="0" y="0" width="2" height="2"/><rect x="0" y="4.5" width="2" height="2"/><rect x="0" y="9" width="2" height="2"/><rect x="5" y="0" width="2" height="2"/><rect x="5" y="4.5" width="2" height="2"/><rect x="5" y="9" width="2" height="2"/></svg>
<div class="a" style="left:17px;top:363.29999999999995px;width:14px;height:14px;border-radius:2px;border:2px solid #2cc49e;background:#fff"></div>
<div class="a" style="left:17px;top:395.29999999999995px;width:14px;height:14px;border-radius:2px;border:2px solid #2cc49e;background:#fff"></div>
<div class="a" style="left:17px;top:427.29999999999995px;width:14px;height:14px;border-radius:2px;border:2px solid #2cc49e;background:#fff"></div>
<div class="a" style="left:17px;top:459.29999999999995px;width:14px;height:14px;border-radius:2px;border:2px solid #2cc49e;background:#fff"></div>
<svg class="a" style="left:243px;top:11px" width="12" height="14" viewBox="0 0 12 14"><path d="M3 6 V4.3 C3 2.5 4.3 1.4 6 1.4 C7.7 1.4 9 2.5 9 4.3 V6" fill="none" stroke="#b8bdc0" stroke-width="1.7"/><rect x="0.6" y="5.8" width="10.8" height="7.9" rx="1.3" fill="#b8bdc0"/><rect x="5.4" y="8.3" width="1.3" height="2.8" fill="#fff"/></svg>
</div>
<div class="a" style="left:1557px;top:215px;width:4px;height:412px;background:#c6c9cb;border-radius:2px"></div>
<div class="hl" style="left:1284px;top:681px;width:280px;background:#e2e5e8"></div><div class="t" style="left:1299.00px;top:131.80px;font-size:14.5px;font-weight:bold;color:#1d1f22;letter-spacing:0.154px;">Manage Columns</div>
<div class="t" style="left:1332.60px;top:180.40px;font-size:13.5px;font-weight:normal;color:#9ea2a5;letter-spacing:-0.040px;">Search</div>
<div class="t" style="left:1323.20px;top:222.10px;font-size:13.5px;font-weight:normal;color:#a0a3a6;letter-spacing:0.200px;">Agent Name</div>
<div class="t" style="left:1322.20px;top:254.10px;font-size:13.5px;font-weight:normal;color:#2e3033;letter-spacing:-0.240px;">Status</div>
<div class="t" style="left:1323.20px;top:286.10px;font-size:13.5px;font-weight:normal;color:#2e3033;letter-spacing:0.112px;">Agent Description</div>
<div class="t" style="left:1322.20px;top:318.10px;font-size:13.5px;font-weight:normal;color:#2e3033;letter-spacing:0.140px;">Build Group</div>
<div class="t" style="left:1323.20px;top:350.10px;font-size:13.5px;font-weight:normal;color:#2e3033;letter-spacing:0.020px;">Available Memory</div>
<div class="t" style="left:1322.20px;top:382.10px;font-size:13.5px;font-weight:normal;color:#2e3033;letter-spacing:-0.086px;">CPU Load</div>
<div class="t" style="left:1322.20px;top:414.10px;font-size:13.5px;font-weight:normal;color:#2e3033;letter-spacing:0.116px;">Licensed/Agent Cores</div>
<div class="t" style="left:1322.20px;top:446.10px;font-size:13.5px;font-weight:normal;color:#2e3033;letter-spacing:-0.067px;">License</div>
<div class="t" style="left:1322.20px;top:478.10px;font-size:13.5px;font-weight:normal;color:#2e3033;letter-spacing:0.600px;">IP</div>
<div class="t" style="left:1323.20px;top:510.10px;font-size:13.5px;font-weight:normal;color:#2e3033;letter-spacing:-0.020px;">Assigned To Initiator</div>
<div class="t" style="left:1322.20px;top:542.10px;font-size:13.5px;font-weight:normal;color:#2e3033;letter-spacing:0.085px;">Last Connected</div>
<div class="t" style="left:1322.20px;top:574.10px;font-size:13.5px;font-weight:normal;color:#2e3033;letter-spacing:-0.075px;">CPU Frequency</div>
<div class="t" style="left:1322.20px;top:606.10px;font-size:13.5px;font-weight:normal;color:#2e3033;letter-spacing:0.143px;">Initiator/Helper Active Cores</div>
<div class="t" style="left:1322.20px;top:638.10px;font-size:13.5px;font-weight:normal;color:#2e3033;letter-spacing:0.289px;">Model Name</div>
<div class="t" style="left:1322.20px;top:670.10px;font-size:13.5px;font-weight:normal;color:#2e3033;letter-spacing:0.000px;height:7.90px;overflow:hidden">Operating System</div>
<div class="t" style="left:1298.50px;top:695.70px;font-size:13px;font-weight:bold;color:#1fb996;letter-spacing:-0.033px;">Reset to Default</div><svg class="a" style="left:1550px;top:103px" width="22" height="26" viewBox="0 0 22 26" stroke="#111" stroke-width="1.3" fill="#fff" stroke-linejoin="round"><path d="M7.5 3 C7.5 1.4 10.5 1.4 10.5 3 L10.5 8.5 C10.8 6.3 13.6 6.3 13.6 8.3 C13.9 6.8 16.6 7 16.7 9 C17.2 7.8 19.8 8.2 19.8 10.2 L19.8 17.5 C19.8 21.8 17.6 24.5 13.6 24.5 C10.6 24.5 9 23.2 7.4 21 L2.8 15.6 C2 14.5 2.6 13.2 4 13.3 C5 13.4 6.3 14.5 7.5 15.3 Z"/><path d="M10.5 8.5 V11.8 M13.6 8.3 V11.8 M16.7 9 V11.8" fill="none"/></svg>
</body></html>
